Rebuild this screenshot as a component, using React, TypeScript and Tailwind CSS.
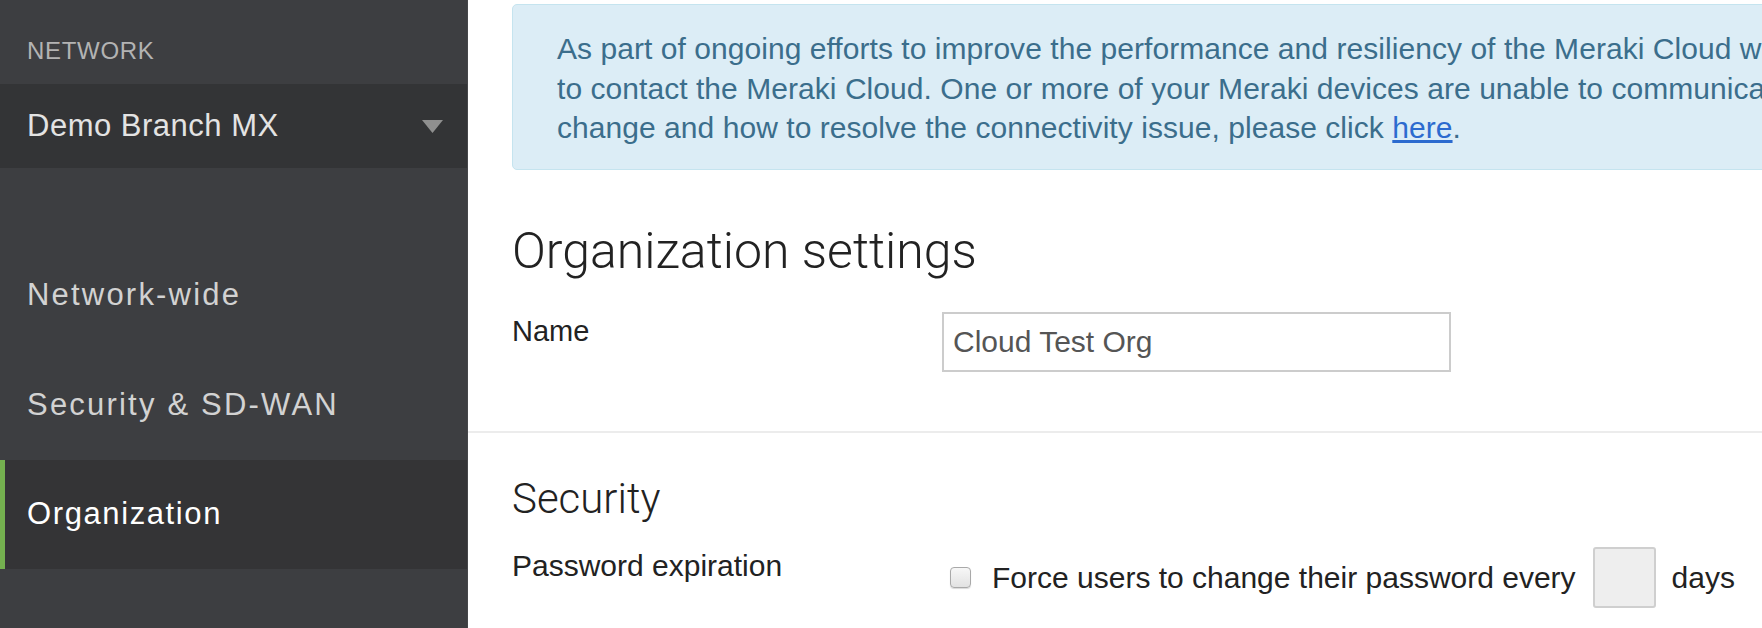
import React from 'react';

const sans = { fontFamily: '"Liberation Sans", Arial, sans-serif' };

const navItems = [
    { label: 'Network-wide', active: false },
    { label: 'Security & SD-WAN', active: false },
    { label: 'Organization', active: true },
];

function Sidebar() {
    return (
        <aside className="w-[468px] shrink-0 h-full bg-[#3d3e41] flex flex-col border-r border-[#46474a]">
            {/* Network picker */}
            <div className="h-[84px] pt-[39px] px-[27px]">
                <span className="block text-[24px] leading-[24px] tracking-[0.7px] text-[#b3b3b3] uppercase">Network</span>
            </div>
            <div className="h-[84px] bg-[#333436] flex items-center justify-between pl-[27px] pr-[24px]">
                <span className="text-[31px] tracking-[0.5px] text-[#e3e3e3]">Demo Branch MX</span>
                <svg width="21" height="13" viewBox="0 0 21 13" className="block">
                    <path d="M0 0 H21 L10.5 13 Z" fill="#8f8f8f" />
                </svg>
            </div>

            <div className="h-[72px]" />

            {navItems.map((item) => (
                <div
                    key={item.label}
                    className={
                        item.active
                            ? 'h-[109px] flex items-center pl-[27px] bg-[#343436] relative'
                            : 'h-[110px] flex items-center pl-[27px]'
                    }
                >
                    {item.active && <div className="absolute left-0 top-0 bottom-0 w-[5px] bg-[#74b04f]" />}
                    <span
                        className={
                            item.active
                                ? 'text-[31px] tracking-[1.6px] text-white'
                                : 'text-[31px] tracking-[2.2px] text-[#d2d2d2]'
                        }
                    >
                        {item.label}
                    </span>
                </div>
            ))}
        </aside>
    );
}

function Notice() {
    return (
        <div className="ml-[44px] mt-[4px] w-[1400px] shrink-0 rounded-[5px] border border-[#c5e4ef] bg-[#dcedf6] pl-[44px] pt-[24px] pb-[21px] text-[30px] leading-[39.5px] tracking-[0.05px] text-[#3b6e8c]">
            <div className="whitespace-nowrap">
                As part of ongoing efforts to improve the performance and resiliency of the Meraki Cloud we are changing the IP addresses used
            </div>
            <div className="whitespace-nowrap">
                to contact the Meraki Cloud. One or more of your Meraki devices are unable to communicate with the new addresses. To learn more about this
            </div>
            <div className="whitespace-nowrap">
                change and how to resolve the connectivity issue, please click{' '}
                <a href="#" className="text-[#2c6bcf] underline">here</a>.
            </div>
        </div>
    );
}

export default function App() {
    return (
        <div className="flex w-[1762px] h-[628px] overflow-hidden bg-white" style={sans}>
            <Sidebar />

            <main className="flex-1 min-w-0 h-full overflow-hidden flex flex-col">
                <Notice />

                {/* Organization settings */}
                <section className="px-[44px]">
                    <h1
                        className="mt-[53px] text-[50px] leading-[56px] font-light text-[#222]"
                        style={{ fontFamily: 'Roboto, "Liberation Sans", sans-serif' }}
                    >
                        Organization settings
                    </h1>
                    <div className="mt-[33px] flex items-start">
                        <label className="w-[430px] shrink-0 mt-[1px] text-[29px] leading-[36px] text-[#222]">Name</label>
                        <input
                            type="text"
                            defaultValue="Cloud Test Org"
                            className="w-[509px] h-[60px] border-2 border-[#cccccc] bg-white pl-[9px] text-[30px] text-[#555] outline-none"
                            style={sans}
                        />
                    </div>
                </section>

                <div className="mt-[59px] h-[2px] bg-[#ececec]" />

                {/* Security */}
                <section className="px-[44px]">
                    <h2
                        className="mt-[42px] text-[42px] leading-[48px] font-light text-[#222]"
                        style={{ fontFamily: 'Roboto, "Liberation Sans", sans-serif' }}
                    >
                        Security
                    </h2>
                    <div className="mt-[24px] flex items-start">
                        <label className="w-[430px] shrink-0 mt-[1px] text-[30px] leading-[36px] text-[#222]">
                            Password expiration
                        </label>
                        <div className="flex items-center h-[61px] whitespace-nowrap">
                            <div className="ml-[8px] w-[21px] h-[21px] rounded-[4px] border border-[#a9a9a9] bg-gradient-to-b from-[#f7f7f7] to-[#e2e2e2] shadow-[0_1px_1px_rgba(0,0,0,0.15)]" />
                            <span className="ml-[21px] text-[30px] text-[#222]">Force users to change their password every</span>
                            <div className="ml-[17px] w-[63px] h-[61px] rounded-[3px] border-2 border-[#cfcfcf] bg-[#eeeeee]" />
                            <span className="ml-[16px] text-[30px] text-[#222]">days</span>
                        </div>
                    </div>
                </section>
            </main>
        </div>
    );
}
